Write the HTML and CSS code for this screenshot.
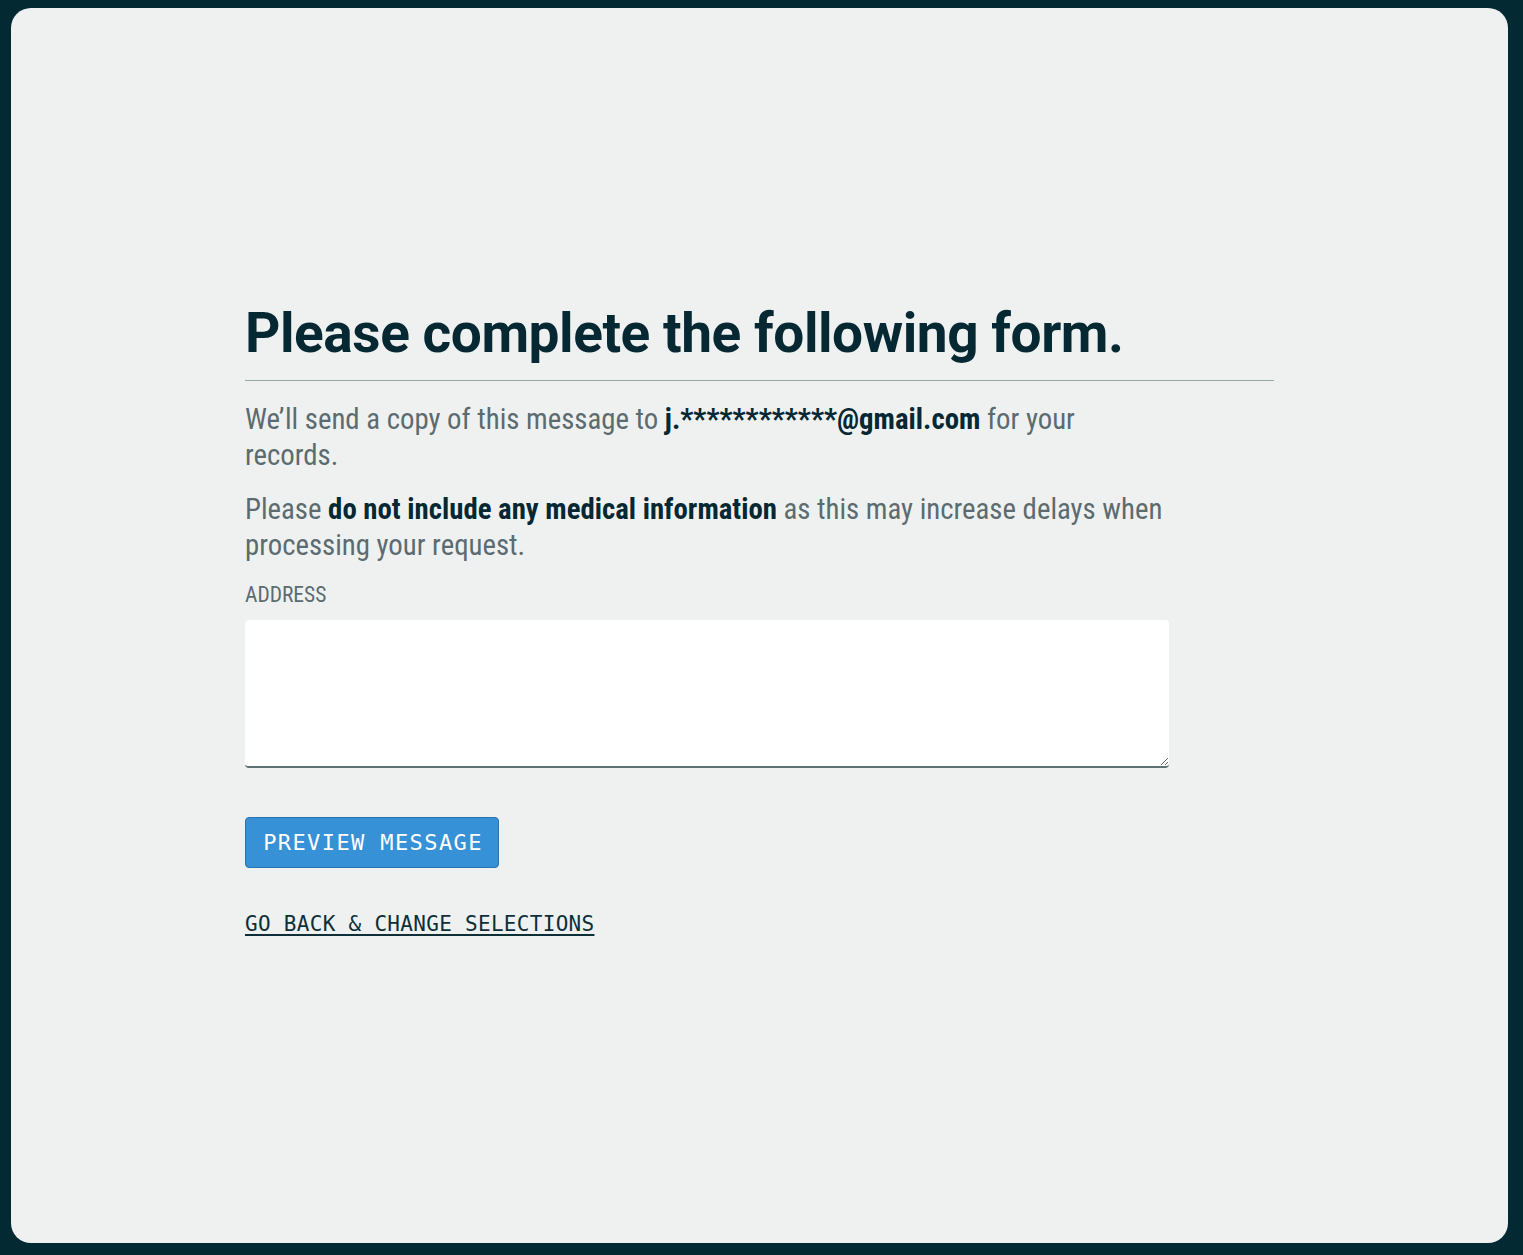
FILE: index.html
```html
<!DOCTYPE html>
<html lang="en">
<head>
<meta charset="utf-8">
<title>Please complete the following form.</title>
<link rel="stylesheet" href="styles.css">
</head>
<body>
<main class="card">
  <div class="content">
    <h1 class="title">Please complete the following form.</h1>
    <p class="copy">We’ll send a copy of this message to <strong>j.************@gmail.com</strong> for your records.</p>
    <p class="copy">Please <strong>do not include any medical information</strong> as this may increase delays when processing your request.</p>
    <label class="label" for="address">ADDRESS</label>
    <textarea class="field" id="address"></textarea>
    <button class="btn" type="button">PREVIEW MESSAGE</button>
    <a class="back" href="#">GO BACK &amp; CHANGE SELECTIONS</a>
  </div>
</main>
</body>
</html>
```

FILE: styles.css
```css
html, body {
  margin: 0;
  padding: 0;
}
body {
  background: #032a33;
  padding: 8px 15px 12px 11px;
  box-sizing: border-box;
  height: 1255px;
  font-family: "Roboto Condensed", "Liberation Sans Narrow", Roboto, sans-serif;
  font-stretch: condensed;
}
.card {
  box-sizing: border-box;
  height: 1235px;
  background: #eff1f1;
  border-radius: 20px;
  display: flex;
  justify-content: center;
  padding-top: 294px;
}
.content {
  width: 1029px;
  display: flex;
  flex-direction: column;
  align-items: flex-start;
}
.title {
  font-family: Roboto, sans-serif;
  font-stretch: normal;
  font-weight: 700;
  font-size: 55px;
  line-height: 62px;
  letter-spacing: -0.45px;
  color: #062833;
  margin: 0;
  padding-bottom: 16px;
  border-bottom: 1px solid #9aa5a8;
  align-self: stretch;
}
.copy {
  width: 924px;
  margin: 20px 0 0;
  font-size: 28.8px;
  line-height: 36px;
  color: #5b6b70;
}
.copy + .copy {
  margin-top: 18px;
}
.copy strong {
  color: #062833;
  font-weight: 700;
}
.label {
  margin-top: 18px;
  font-size: 21.5px;
  line-height: 28px;
  color: #5b6b70;
}
.field {
  box-sizing: border-box;
  margin-top: 11px;
  width: 924px;
  height: 148px;
  background: #ffffff;
  border: none;
  border-bottom: 2px solid #5f7272;
  border-radius: 4px;
  padding: 10px;
  font: inherit;
  outline: none;
}
.btn {
  margin-top: 49px;
  box-sizing: border-box;
  width: 254px;
  height: 51px;
  background: #3791d6;
  border: 1px solid #2a73ad;
  border-radius: 4px;
  color: #ffffff;
  font-family: "DejaVu Sans Mono", monospace;
  font-stretch: normal;
  font-size: 22px;
  letter-spacing: 1.4px;
  padding: 0 0 0 2px;
  text-align: center;
  cursor: pointer;
}
.back {
  margin-top: 42px;
  font-family: "DejaVu Sans Mono", monospace;
  font-stretch: normal;
  font-size: 21px;
  line-height: 28px;
  letter-spacing: 0.3px;
  color: #0f2f38;
  text-decoration: underline;
  text-decoration-thickness: 2px;
  text-underline-offset: 3px;
}
```
